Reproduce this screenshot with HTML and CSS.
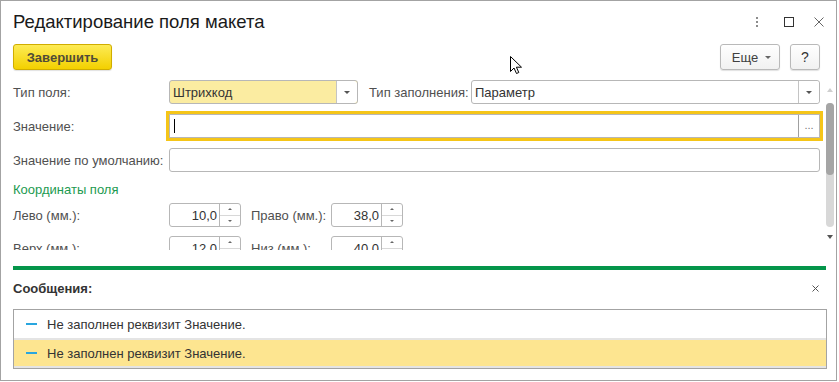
FILE: index.html
```html
<!DOCTYPE html>
<html lang="ru">
<head>
    <meta charset="UTF-8">
    <title>Редактирование поля макета</title>
    <link rel="stylesheet" href="styles.css">
</head>
<body>
    <div class="window">
        <!-- заголовок окна -->
        <div class="titlebar">
            <h1 class="title">Редактирование поля макета</h1>
            <div class="win-icons">
                <svg class="ic-dots" width="10" height="12" viewBox="0 0 10 12">
                    <rect x="4" y="0" width="2" height="2" fill="#8c8c8c"/>
                    <rect x="4" y="4" width="2" height="2" fill="#8c8c8c"/>
                    <rect x="4" y="8" width="2" height="2" fill="#8c8c8c"/>
                </svg>
                <svg class="ic-max" width="10" height="10" viewBox="0 0 10 10">
                    <rect x="0.5" y="0.5" width="9" height="9" fill="none" stroke="#333" stroke-width="1"/>
                </svg>
                <svg class="ic-close" width="10" height="10" viewBox="0 0 10 10">
                    <path d="M0.5 0.5 L9.5 9.5 M9.5 0.5 L0.5 9.5" stroke="#666" stroke-width="1"/>
                </svg>
            </div>
        </div>

        <!-- командная панель -->
        <div class="toolbar">
            <button class="btn btn-default">Завершить</button>
            <span class="spacer"></span>
            <button class="btn btn-more">Еще <span class="caret"></span></button>
            <button class="btn btn-help">?</button>
        </div>

        <!-- поля формы -->
        <div class="content">
            <div class="form">
                <div class="row">
                    <span class="label">Тип поля:</span>
                    <div class="field select select-type yellow">
                        <span class="field-text">Штрихкод</span>
                        <span class="field-btn"><i class="tri"></i></span>
                    </div>
                    <span class="label label-fill">Тип заполнения:</span>
                    <div class="field select grow">
                        <span class="field-text">Параметр</span>
                        <span class="field-btn"><i class="tri"></i></span>
                    </div>
                </div>
                <div class="row">
                    <span class="label">Значение:</span>
                    <div class="field grow focused">
                        <span class="field-text"><span class="caret-line"></span></span>
                        <span class="field-btn dots-btn">...</span>
                    </div>
                </div>
                <div class="row">
                    <span class="label">Значение по умолчанию:</span>
                    <div class="field grow"></div>
                </div>

                <div class="group-title">Координаты поля</div>

                <div class="row">
                    <span class="label">Лево (мм.):</span>
                    <div class="field spin">
                        <span class="spin-val">10,0</span>
                        <span class="spin-btns"><i class="up"></i><i class="down"></i></span>
                    </div>
                    <span class="label label-right">Право (мм.):</span>
                    <div class="field spin">
                        <span class="spin-val">38,0</span>
                        <span class="spin-btns"><i class="up"></i><i class="down"></i></span>
                    </div>
                </div>
                <div class="row row-tight">
                    <span class="label">Верх (мм.):</span>
                    <div class="field spin">
                        <span class="spin-val">12,0</span>
                        <span class="spin-btns"><i class="up"></i><i class="down"></i></span>
                    </div>
                    <span class="label label-right">Низ (мм.):</span>
                    <div class="field spin">
                        <span class="spin-val">40,0</span>
                        <span class="spin-btns"><i class="up"></i><i class="down"></i></span>
                    </div>
                </div>
            </div>

            <div class="vscroll">
                <i class="sc-up"></i>
                <div class="sc-track"><div class="sc-thumb"></div></div>
                <i class="sc-down"></i>
            </div>
        </div>

        <!-- сообщения -->
        <div class="divider"></div>
        <div class="msg-head">
            <span class="msg-title">Сообщения:</span>
            <svg width="7" height="7" viewBox="0 0 7 7">
                <path d="M0.5 0.5 L6.5 6.5 M6.5 0.5 L0.5 6.5" stroke="#555" stroke-width="1"/>
            </svg>
        </div>
        <ul class="msg-list">
            <li class="msg"><span class="mark"></span>Не заполнен реквизит Значение.</li>
            <li class="msg current"><span class="mark"></span>Не заполнен реквизит Значение.</li>
        </ul>

        <!-- указатель мыши -->
        <svg class="pointer" width="13" height="19" viewBox="0 0 13 19">
            <path d="M0.5 0.5 L0.5 15.5 L4 12 L6.5 17.5 L8.8 16.5 L6.4 11.2 L11.5 11.2 Z" fill="#fff" stroke="#000" stroke-width="1" stroke-linejoin="round"/>
        </svg>
    </div>
</body>
</html>
```

FILE: styles.css
```css
* {
    box-sizing: border-box;
}

body {
    margin: 0;
    background: #ffffff;
    font-family: "Liberation Sans", Arial, sans-serif;
    font-size: 13px;
    color: #505050;
}

.window {
    position: relative;
    width: 837px;
    height: 381px;
    border: 1px solid #a3a3a3;
    background: #ffffff;
    display: flex;
    flex-direction: column;
}

/* заголовок */
.titlebar {
    height: 43px;
    padding: 8px 12px 0 12px;
    display: flex;
    align-items: flex-start;
}

.title {
    margin: 0;
    font-size: 18.5px;
    font-weight: normal;
    line-height: 26px;
    color: #1a1a1a;
    flex: 1;
}

.win-icons {
    height: 26px;
    display: flex;
    align-items: center;
}

.ic-dots {
    margin-top: 2px;
}

.ic-max {
    margin-left: 22px;
}

.ic-close {
    margin-left: 20px;
}

/* кнопки */
.toolbar {
    height: 26px;
    padding: 0 16px 0 12px;
    display: flex;
}

.spacer {
    flex: 1;
}

.btn {
    height: 26px;
    border: 1px solid #b9b9b9;
    border-radius: 3px;
    background: linear-gradient(#ffffff, #f1f1f1);
    box-shadow: 0 1px 1px rgba(0, 0, 0, 0.12);
    font-family: "Liberation Sans", Arial, sans-serif;
    font-size: 13px;
    color: #404040;
    padding: 0;
    display: flex;
    align-items: center;
    justify-content: center;
}

.btn-default {
    width: 99px;
    border-color: #d0ad00;
    background: linear-gradient(#fdeb55, #f3d000);
    font-weight: bold;
    color: #4f4b38;
}

.btn-more {
    width: 60px;
    padding-left: 3px;
}

.caret {
    display: inline-block;
    margin-left: 7px;
    border-left: 3px solid transparent;
    border-right: 3px solid transparent;
    border-top: 3px solid #666;
}

.btn-help {
    width: 30px;
    margin-left: 10px;
    font-size: 14px;
    color: #333;
}

/* форма */
.content {
    display: flex;
    margin-top: 10px;
    height: 170px;
}

.form {
    flex: 1;
    overflow: hidden;
    padding: 0 3px 0 12px;
}

.row {
    display: flex;
    align-items: center;
    height: 24px;
    margin-bottom: 10px;
}

.row-tight {
    margin-top: -1px;
}

.label {
    width: 156px;
    flex-shrink: 0;
    white-space: nowrap;
}

.label-fill {
    width: 102px;
    margin-left: 11px;
}

.label-right {
    width: 80px;
    margin-left: 10px;
}

.field {
    height: 24px;
    border: 1px solid #b7b7b7;
    border-radius: 3px;
    background: #ffffff;
    display: flex;
    align-items: stretch;
    color: #333;
}

.grow {
    flex: 1;
}

.select-type {
    width: 189px;
}

.yellow {
    background: #fbeca1;
}

.focused {
    outline: 3px solid #f5c518;
    border-radius: 0;
}

.field-text {
    flex: 1;
    padding-left: 3px;
    display: flex;
    align-items: center;
}

.field-btn {
    width: 21px;
    border-left: 1px solid #c4c4c4;
    background: #ffffff;
    border-radius: 0 3px 3px 0;
    display: flex;
    align-items: center;
    justify-content: center;
}

.tri {
    border-left: 3px solid transparent;
    border-right: 3px solid transparent;
    border-top: 3px solid #555;
}

.dots-btn {
    color: #777;
    font-size: 11px;
    border-left-color: #a0a0a0;
    padding-bottom: 2px;
}

.caret-line {
    width: 1px;
    height: 14px;
    margin-left: 1px;
    background: #000;
}

.group-title {
    margin-top: -3px;
    line-height: 21px;
    margin-bottom: 3px;
    color: #1c9a50;
}

.spin {
    width: 72px;
}

.spin-val {
    flex: 1;
    padding-right: 2px;
    display: flex;
    align-items: center;
    justify-content: flex-end;
}

.spin-btns {
    width: 21px;
    border-left: 1px solid #b7b7b7;
    display: flex;
    flex-direction: column;
}

.spin-btns i {
    flex: 1;
    display: flex;
    align-items: center;
    justify-content: center;
}

.spin-btns .up {
    border-bottom: 1px solid #d8d8d8;
}

.spin-btns .up::before {
    content: "";
    border-left: 2px solid transparent;
    border-right: 2px solid transparent;
    border-bottom: 2px solid #666;
}

.spin-btns .down::before {
    content: "";
    border-left: 2px solid transparent;
    border-right: 2px solid transparent;
    border-top: 2px solid #666;
}

/* полоса прокрутки */
.vscroll {
    width: 13px;
    display: flex;
    flex-direction: column;
    align-items: center;
    padding-top: 8px;
}

.sc-up {
    border-left: 3px solid transparent;
    border-right: 3px solid transparent;
    border-bottom: 4px solid #cfcfcf;
}

.sc-track {
    width: 8px;
    height: 124px;
    margin-top: 11px;
    border-radius: 4px;
    background: #d8d8d8;
}

.sc-thumb {
    height: 72px;
    border-radius: 4px;
    background: #a5a5a5;
}

.sc-down {
    margin-top: 8px;
    border-left: 3px solid transparent;
    border-right: 3px solid transparent;
    border-top: 4px solid #555;
}

/* сообщения */
.divider {
    height: 4px;
    margin: 16px 10px 0 12px;
    background: #04954a;
}

.msg-head {
    height: 39px;
    padding: 0 17px 3px 12px;
    display: flex;
    align-items: center;
    justify-content: space-between;
}

.msg-title {
    font-weight: bold;
    color: #333;
}

.msg-list {
    list-style: none;
    margin: 0 9px 0 12px;
    padding: 0;
    border: 1px solid #a3a3a3;
}

.msg {
    height: 30px;
    border-bottom: 2px solid #e4e4e4;
    display: flex;
    align-items: center;
    color: #333;
    padding-left: 12px;
}

.msg.current {
    height: 28px;
    background: #fde590;
}

.mark {
    width: 11px;
    height: 2px;
    background: #29a6df;
    margin-right: 10px;
}

.pointer {
    position: absolute;
    left: 509px;
    top: 55px;
}
```
